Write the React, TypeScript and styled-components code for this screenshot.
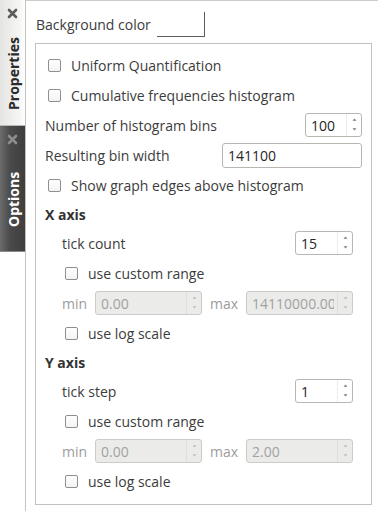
import React from 'react';
import styled, { createGlobalStyle } from 'styled-components';

const GlobalStyle = createGlobalStyle`
  html, body {
    margin: 0;
    padding: 0;
    background: #ffffff;
  }
  body {
    font-family: "Open Sans", "DejaVu Sans", sans-serif;
    font-size: 14px;
    color: #3c3c3c;
  }
`;

const Window = styled.div`
  display: flex;
  width: 378px;
  height: 511px;
  overflow: hidden;
  background: #ffffff;
`;

const TabBar = styled.div`
  flex: none;
  width: 25px;
  border-right: 1px solid #c6c3be;
  display: flex;
  flex-direction: column;
`;

const Tab = styled.div<{ $active?: boolean; $h: number }>`
  height: ${(p) => p.$h}px;
  display: flex;
  flex-direction: column;
  align-items: center;
  box-sizing: border-box;
  background: ${(p) =>
    p.$active
      ? 'linear-gradient(to right, #e4e4e3, #f6f6f5 80%, #ffffff)'
      : 'linear-gradient(to right, #6c6c6c, #4a4a4a 40%, #3e3e3e)'};
  border-top: ${(p) => (p.$active ? 'none' : '1px solid #b8b8b8')};
  border-bottom: ${(p) => (p.$active ? 'none' : '1px solid #8a8a8a')};
`;

const CloseBox = styled.div`
  flex: none;
  height: 22px;
  width: 25px;
  display: flex;
  align-items: center;
  justify-content: center;
  padding-top: 4px;
  box-sizing: border-box;
`;

const TabLabel = styled.div<{ $active?: boolean }>`
  flex: 1;
  display: flex;
  align-items: center;
  justify-content: center;
  writing-mode: vertical-rl;
  transform: rotate(180deg);
  font-weight: 700;
  font-size: 14px;
  color: ${(p) => (p.$active ? '#2b2b2b' : '#ffffff')};
  padding-right: 1px;
`;

const Panel = styled.div`
  flex: 1;
  border-top: 1px solid #cfccc7;
  padding: 10px 6px 0 9px;
  display: flex;
  flex-direction: column;
`;

const HeaderRow = styled.div`
  display: flex;
  align-items: center;
  height: 27px;
  padding-left: 1px;
`;

const ColorButton = styled.div`
  width: 47px;
  height: 24px;
  margin-left: 6px;
  background: #ffffff;
  border-right: 1px solid #5c5c5c;
  border-bottom: 1px solid #5c5c5c;
`;

const GroupBox = styled.div`
  margin-top: 5px;
  border: 1px solid #c4c1bc;
  padding: 6px 9px 8px 9px;
  display: flex;
  flex-direction: column;
`;

const Row = styled.div<{ $h?: number }>`
  display: flex;
  align-items: center;
  height: ${(p) => p.$h ?? 30}px;
  white-space: nowrap;
`;

const Spacer = styled.div`
  flex: 1;
`;

const Heading = styled.div`
  font-weight: 700;
  color: #333333;
`;

const SubSection = styled.div`
  display: flex;
  flex-direction: column;
  padding: 0 9px 0 17px;
`;

const Box = styled.span`
  flex: none;
  width: 11px;
  height: 11px;
  margin: 0 10px 0 3px;
  border: 1px solid #8f8f8f;
  border-radius: 2px;
  background: linear-gradient(#ffffff, #f3f3f3);
`;

const Muted = styled.span`
  color: #9c9c9c;
`;

const SpinFrame = styled.div<{ $w?: number; $disabled?: boolean }>`
  display: flex;
  flex: ${(p) => (p.$w ? 'none' : '1')};
  width: ${(p) => (p.$w ? `${p.$w}px` : 'auto')};
  min-width: 0;
  height: 24px;
  box-sizing: border-box;
  border: 1px solid ${(p) => (p.$disabled ? '#cdcbc8' : '#b9b6b1')};
  border-radius: 3px;
  background: ${(p) => (p.$disabled ? '#ebebea' : '#ffffff')};
  color: ${(p) => (p.$disabled ? '#a2a2a2' : '#262626')};
  overflow: hidden;
`;

const SpinValue = styled.div`
  flex: 1;
  min-width: 0;
  overflow: hidden;
  padding-left: 5px;
  margin-right: 3px;
  display: flex;
  align-items: center;
`;

const SpinArrows = styled.div<{ $disabled?: boolean }>`
  flex: none;
  width: 15px;
  border-left: 1px solid ${(p) => (p.$disabled ? '#e0dfdd' : '#ececea')};
  display: flex;
  flex-direction: column;
  align-items: center;
  justify-content: space-between;
  padding: 4px 0 5px;
  box-sizing: border-box;
`;

const LineEdit = styled.div`
  width: 140px;
  height: 25px;
  box-sizing: border-box;
  border: 1px solid #b9b6b1;
  border-radius: 3px;
  background: #ffffff;
  color: #262626;
  padding-left: 5px;
  display: flex;
  align-items: center;
`;

const RangeRow = styled(Row)`
  gap: 8px;
`;

const CloseIcon = ({ color }: { color: string }) => (
  <svg width="11" height="11" viewBox="0 0 11 11">
    <path d="M2 2 L9 9 M9 2 L2 9" stroke={color} strokeWidth="2.6" strokeLinecap="round" />
  </svg>
);

const Arrow = ({ up, color }: { up?: boolean; color: string }) => (
  <svg width="5" height="3" viewBox="0 0 5 3">
    <path d={up ? 'M0.5 2.8 L2.5 0.5 L4.5 2.8' : 'M0.5 0.2 L2.5 2.5 L4.5 0.2'} fill={color} />
  </svg>
);

const SpinBox = ({ value, w, disabled }: { value: string; w?: number; disabled?: boolean }) => (
  <SpinFrame $w={w} $disabled={disabled}>
    <SpinValue>{value}</SpinValue>
    <SpinArrows $disabled={disabled}>
      <Arrow up color={disabled ? '#bdbdbd' : '#7a7a7a'} />
      <Arrow color={disabled ? '#bdbdbd' : '#7a7a7a'} />
    </SpinArrows>
  </SpinFrame>
);

const Check = ({ label }: { label: string }) => (
  <Row>
    <Box />
    {label}
  </Row>
);

const AxisSection = ({ stepLabel, step, max }: { stepLabel: string; step: string; max: string }) => (
  <SubSection>
    <Row>
      {stepLabel}
      <Spacer />
      <SpinBox value={step} w={58} />
    </Row>
    <Check label="use custom range" />
    <RangeRow>
      <Muted>min</Muted>
      <SpinBox value="0.00" disabled />
      <Muted>max</Muted>
      <SpinBox value={max} disabled />
    </RangeRow>
    <Check label="use log scale" />
  </SubSection>
);

export default function App() {
  return (
    <Window>
      <GlobalStyle />
      <TabBar>
        <Tab $active $h={125}>
          <CloseBox>
            <CloseIcon color="#5b5b5b" />
          </CloseBox>
          <TabLabel $active>Properties</TabLabel>
        </Tab>
        <Tab $h={127}>
          <CloseBox>
            <CloseIcon color="#8c8c8c" />
          </CloseBox>
          <TabLabel>Options</TabLabel>
        </Tab>
      </TabBar>
      <Panel>
        <HeaderRow>
          Background color
          <ColorButton />
        </HeaderRow>
        <GroupBox>
          <Check label="Uniform Quantification" />
          <Check label="Cumulative frequencies histogram" />
          <Row>
            Number of histogram bins
            <Spacer />
            <SpinBox value="100" w={57} />
          </Row>
          <Row>
            Resulting bin width
            <Spacer />
            <LineEdit>141100</LineEdit>
          </Row>
          <Check label="Show graph edges above histogram" />
          <Row $h={28}>
            <Heading>X axis</Heading>
          </Row>
          <AxisSection stepLabel="tick count" step="15" max="14110000.00" />
          <Row $h={28}>
            <Heading>Y axis</Heading>
          </Row>
          <AxisSection stepLabel="tick step" step="1" max="2.00" />
        </GroupBox>
      </Panel>
    </Window>
  );
}
